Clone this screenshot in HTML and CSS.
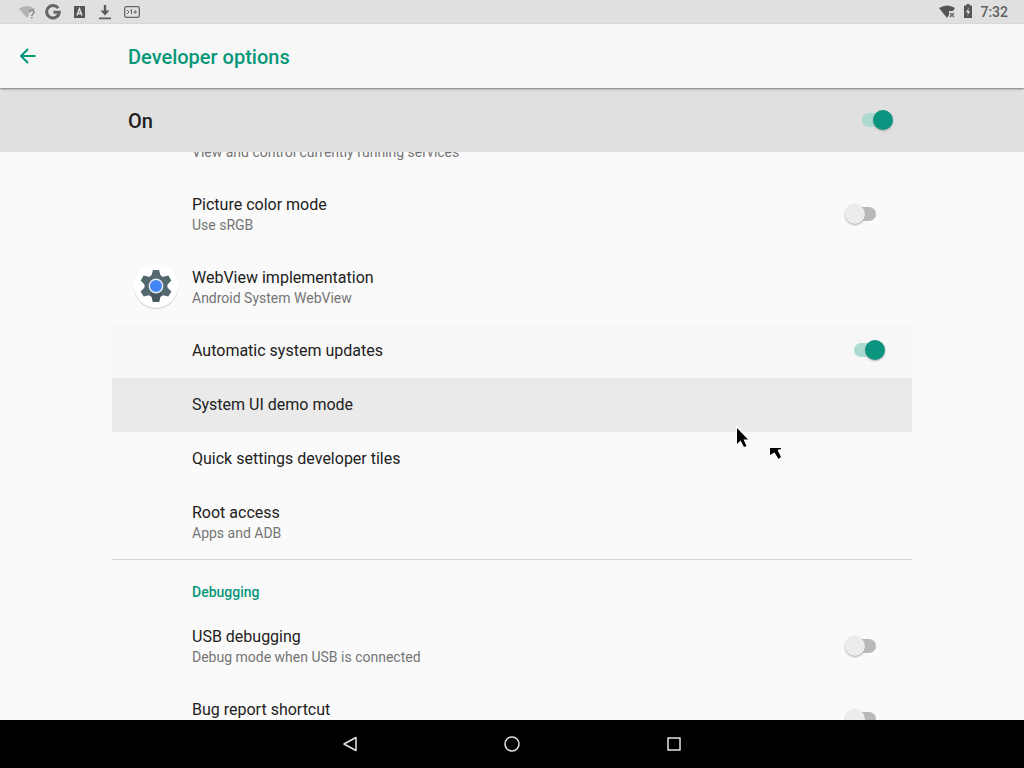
FILE: index.html
```html
<!DOCTYPE html>
<html lang="en">
<head>
<meta charset="utf-8">
<meta name="viewport" content="width=device-width, initial-scale=1">
<title>Developer options</title>
<link rel="stylesheet" href="styles.css">
</head>
<body>
<div class="status-bar">
  <div class="status-left">
    <svg width="18" height="16" viewBox="0 0 18 16"><path d="M1 5Q9-1 17 5L15 7H11V11L9 14Z" fill="#b4b4b4"/><path d="M11.500 8.500C11.500 5.500 16 5.500 16 8.200C16 10 13.800 10 13.800 12M13.800 13v1.500" fill="none" stroke="#888" stroke-width="1.500"/></svg>
    <svg width="16" height="16" viewBox="0 0 16 16"><path d="M13.200 4.200A6.300 6.300 0 1 0 14.300 8.200H8.500" fill="none" stroke="#666" stroke-width="3"/></svg>
    <svg width="12" height="12" viewBox="0 0 12 12"><path d="M0 0H11V12H0Z" fill="#555"/><path d="M3 9.500L5.500 2.800L8 9.500M4 7.500H7" fill="none" stroke="#e4e4e4" stroke-width="1.400"/></svg>
    <svg width="12" height="16" viewBox="0 0 12 16"><path d="M4.800 1H7.200V6.500H10.500L6 11.500L1.500 6.500H4.800ZM0 13.500H12V15.300H0Z" fill="#5a5a5a"/></svg>
    <svg width="16" height="12" viewBox="0 0 16 12"><rect x=".7" y=".7" width="14.600" height="10.600" rx="1.500" fill="none" stroke="#666" stroke-width="1.300"/><path d="M3 4L5 6L3 8M7.500 3.500V8M6.500 4.500L7.500 3.500M9.500 6H13M11.200 4.300V7.700" fill="none" stroke="#666"/></svg>
  </div>
  <div class="status-right">
    <svg width="18" height="14" viewBox="0 0 18 14"><path d="M1 3Q9-2 17 3L15 6H11V10L9 13Z" fill="#555"/><path d="M12 8L16 12M16 8L12 12" stroke="#666" stroke-width="1.400"/></svg>
    <svg width="8" height="16" viewBox="0 0 8 16"><path d="M2.500 0H5.500V1.500H8V14H0V1.500H2.500Z" fill="#555"/><path d="M4.800 3.500L2 8.500H4L3.300 12L6 7H4.200Z" fill="#e4e4e4"/></svg>
    <time>7:32</time>
  </div>
</div>
<header class="app-bar">
  <button class="back" aria-label="Navigate up"><svg width="16" height="16" viewBox="0 0 16 16"><path d="M15.500 8H2M8 1L1 8L8 15" fill="none" stroke="#079779" stroke-width="2"/></svg></button>
  <h1>Developer options</h1>
</header>
<label class="master"><span>On</span><input class="switch" type="checkbox" checked></label>
<main class="viewport">
  <div class="list">
    <button class="row"><span class="title">Running services</span><span class="summary">View and control currently running services</span></button>
    <label class="row"><span class="title">Picture color mode</span><span class="summary">Use sRGB</span><input class="switch" type="checkbox"></label>
    <button class="row">
      <svg class="app-icon" width="46" height="46" viewBox="-23 -23 46 46">
        <circle cy="1" r="22" fill="#ccc"/><circle r="22" fill="#fff"/>
        <g fill="#546870"><circle r="11.500"/>
          <path id="tooth" d="M-5-9L-3-16H3L5-9Z"/><use href="#tooth" transform="rotate(60)"/><use href="#tooth" transform="rotate(120)"/><use href="#tooth" transform="rotate(180)"/><use href="#tooth" transform="rotate(240)"/><use href="#tooth" transform="rotate(300)"/></g>
        <path d="M-5 8L0 0L5 8L3 16H-3Z" fill="#46565d"/>
        <circle r="6.700" fill="#4285f4" stroke="#e8eefa" stroke-width="1.400"/>
      </svg>
      <span class="title">WebView implementation</span><span class="summary">Android System WebView</span></button>
    <label class="row fading"><span class="title">Automatic system updates</span><input class="switch" type="checkbox" checked></label>
    <button class="row hovered"><span class="title">System UI demo mode</span></button>
    <button class="row"><span class="title">Quick settings developer tiles</span></button>
    <button class="row"><span class="title">Root access</span><span class="summary">Apps and ADB</span></button>
    <h2>Debugging</h2>
    <label class="row"><span class="title">USB debugging</span><span class="summary">Debug mode when USB is connected</span><input class="switch" type="checkbox"></label>
    <label class="row two-line"><span class="title">Bug report shortcut</span><input class="switch" type="checkbox"></label>
  </div>
</main>
<nav class="nav-bar">
  <button aria-label="Back"><svg width="16" height="16" viewBox="0 0 16 16"><path d="M14 1.500V14.500L2 8Z" fill="none" stroke="#e4e4e4" stroke-width="1.500" stroke-linejoin="round"/></svg></button>
  <button aria-label="Home"><svg width="16" height="16" viewBox="0 0 16 16"><circle cx="8" cy="8" r="7" fill="none" stroke="#e4e4e4" stroke-width="1.500"/></svg></button>
  <button aria-label="Recent apps"><svg width="16" height="16" viewBox="0 0 16 16"><path d="M2 2H14V14H2Z" fill="none" stroke="#e4e4e4" stroke-width="1.500" stroke-linejoin="round"/></svg></button>
</nav>
<svg class="pointer pointer-main" width="16" height="24" viewBox="-2 -2 16 24"><path d="M0 0V16L3.500 12.500L7 19L9.500 18L6.500 11.500H11Z" stroke="#fff" stroke-width="2.500" stroke-opacity=".8" paint-order="stroke"/></svg>
<svg class="pointer pointer-trail" width="16" height="16" viewBox="-2 0 16 16"><path d="M0 0H11V1L7.500 2L11 9L8.500 11L4.500 4.500L0 7Z" stroke="#fff" stroke-width="2" stroke-opacity=".8" paint-order="stroke"/></svg>
</body>
</html>
```
FILE: styles.css
```css
* { box-sizing: border-box; }
body {
  margin: 0;
  height: 100vh;
  display: flex;
  flex-direction: column;
  overflow: hidden;
  background: #fafafa;
  color: #212121;
  font-family: Roboto, "Noto Sans", sans-serif;
  font-size: 16px;
}
svg { display: block; flex: none; }
button {
  border: 0;
  padding: 0;
  background: none;
  color: inherit;
  font: inherit;
  text-align: left;
}
.status-bar {
  flex: none;
  height: 24px;
  display: flex;
  align-items: center;
  justify-content: space-between;
  padding: 0 16px 0 18px;
  background: #e0e0e0;
}
.status-left { display: flex; align-items: center; gap: 13px; }
.status-left svg:first-child { margin-right: -4px; }
.status-right { display: flex; align-items: center; gap: 8px; }
.status-right time { font-size: 14px; font-weight: 500; color: #606060; }
.app-bar {
  position: relative;
  flex: none;
  height: 64px;
  display: flex;
  align-items: center;
  background: #f7f7f7;
  box-shadow: 0 1px 2px #777;
}
.back { width: 128px; padding-left: 20px; }
.app-bar h1 {
  margin: 0;
  font-size: 20px;
  font-weight: 500;
  line-height: 24px;
  padding-top: 2px;
  color: #079779;
}
.master {
  flex: none;
  height: 64px;
  display: flex;
  align-items: center;
  justify-content: space-between;
  padding: 0 131px 0 128px;
  background: #e0e0e0;
  font-size: 20px;
  font-weight: 500;
}
.master span { padding-top: 2px; }
.viewport { flex: 1; min-height: 0; overflow: hidden; }
.list {
  max-width: 800px;
  margin: -47px auto 0;
  display: flex;
  flex-direction: column;
}
.row {
  flex: none;
  min-height: 54px;
  padding: 16px 27px 16px 22px;
  display: grid;
  grid-template-columns: 58px 1fr auto;
  align-items: center;
  align-content: start;
}
.two-line { grid-template-rows: 21px 20px; }
.title { grid-column: 2; grid-row: 1; line-height: 21px; }
.summary {
  grid-column: 2;
  grid-row: 2;
  font-size: 14px;
  line-height: 20px;
  color: #757575;
}
.row .switch { grid-column: 3; grid-row: 1 / span 2; margin: -10px 0 -8px; }
.app-icon { grid-column: 1; grid-row: 1 / span 2; margin: -10px 0 -6px -1px; }
.fading { background: #f7f7f7; }
.hovered { background: #eaeaea; }
.list h2 {
  flex: none;
  margin: 0;
  padding: 24px 80px 10px;
  border-top: 1px solid #d4d4d4;
  font-size: 14px;
  font-weight: 500;
  line-height: 16px;
  color: #079779;
}
.switch {
  appearance: none;
  margin: 0;
  width: 40px;
  height: 24px;
  display: grid;
  align-items: center;
}
.switch::before, .switch::after { content: ""; grid-area: 1 / 1; }
.switch::before {
  height: 14px;
  margin: 0 9px;
  border-radius: 7px;
  background: #b9b9b9;
}
.switch::after {
  width: 20px;
  height: 20px;
  border-radius: 50%;
  background: #ececec;
  box-shadow: 0 1px 2px #aaa;
}
.switch:checked::before { background: #acdad1; }
.switch:checked::after { justify-self: end; background: #0b9480; }
.nav-bar {
  flex: none;
  height: 48px;
  display: flex;
  justify-content: center;
  align-items: center;
  background: #000;
}
.nav-bar button { width: 162px; height: 48px; display: grid; place-items: center; }
.pointer { position: absolute; pointer-events: none; }
.pointer-main { left: 735px; top: 426px; }
.pointer-trail { left: 768px; top: 448px; }
```
